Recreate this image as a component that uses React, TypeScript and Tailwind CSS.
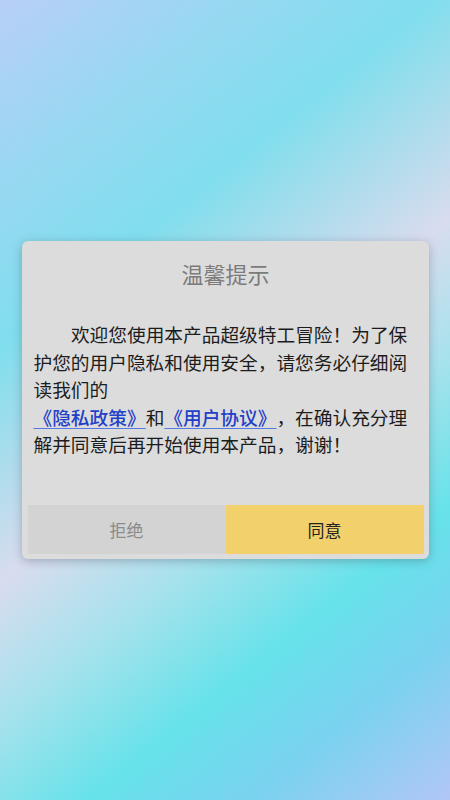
import React from "react";

const cjk = { fontFamily: '"Noto Sans CJK SC", "Noto Sans", sans-serif' };

export default function App() {
  return (
    <div
      className="flex h-[800px] w-[450px] items-center justify-center bg-[linear-gradient(141deg,#b8cff6_0%,#98d8f1_16%,#80deed_30%,#b4dcec_42%,#d8dcef_50%,#a6e2ec_62%,#66e2ea_75%,#7ad2f0_86%,#b2c6f6_100%)]"
      style={cjk}
    >
      <div className="flex w-[407px] flex-col rounded-[6px] bg-[#dcdcdc] pt-[17px] pb-[5px] pl-[6px] pr-[5px] shadow-[0_2px_10px_rgba(60,70,90,0.35)]">
        <div className="h-[30px] text-center text-[22px] leading-[30px] text-[#7b7b7b]">
          温馨提示
        </div>
        <div className="mt-[32px] pl-[6px] pr-[6px] text-[18.7px] leading-[27.5px] text-[#1c1c1c] [text-spacing-trim:space-all]">
          <p className="indent-[2em]">
            欢迎您使用本产品超级特工冒险！为了保护您的用户隐私和使用安全，请您务必仔细阅读我们的
          </p>
          <p>
            <span className="font-medium text-[#2340c8] underline decoration-[#5878e2] decoration-1 underline-offset-[3px]">
              《隐私政策》
            </span>
            和
            <span className="font-medium text-[#2340c8] underline decoration-[#5878e2] decoration-1 underline-offset-[3px]">
              《用户协议》
            </span>
            ，在确认充分理解并同意后再开始使用本产品，谢谢！
          </p>
        </div>
        <div className="mt-[47px] flex h-[49px]">
          <button className="flex flex-1 items-center justify-center bg-[#d3d3d3] text-[17px] text-[#8c8c8c]">
            拒绝
          </button>
          <button className="flex flex-1 items-center justify-center bg-[#f2d06c] text-[17px] text-[#222222]">
            同意
          </button>
        </div>
      </div>
    </div>
  );
}
